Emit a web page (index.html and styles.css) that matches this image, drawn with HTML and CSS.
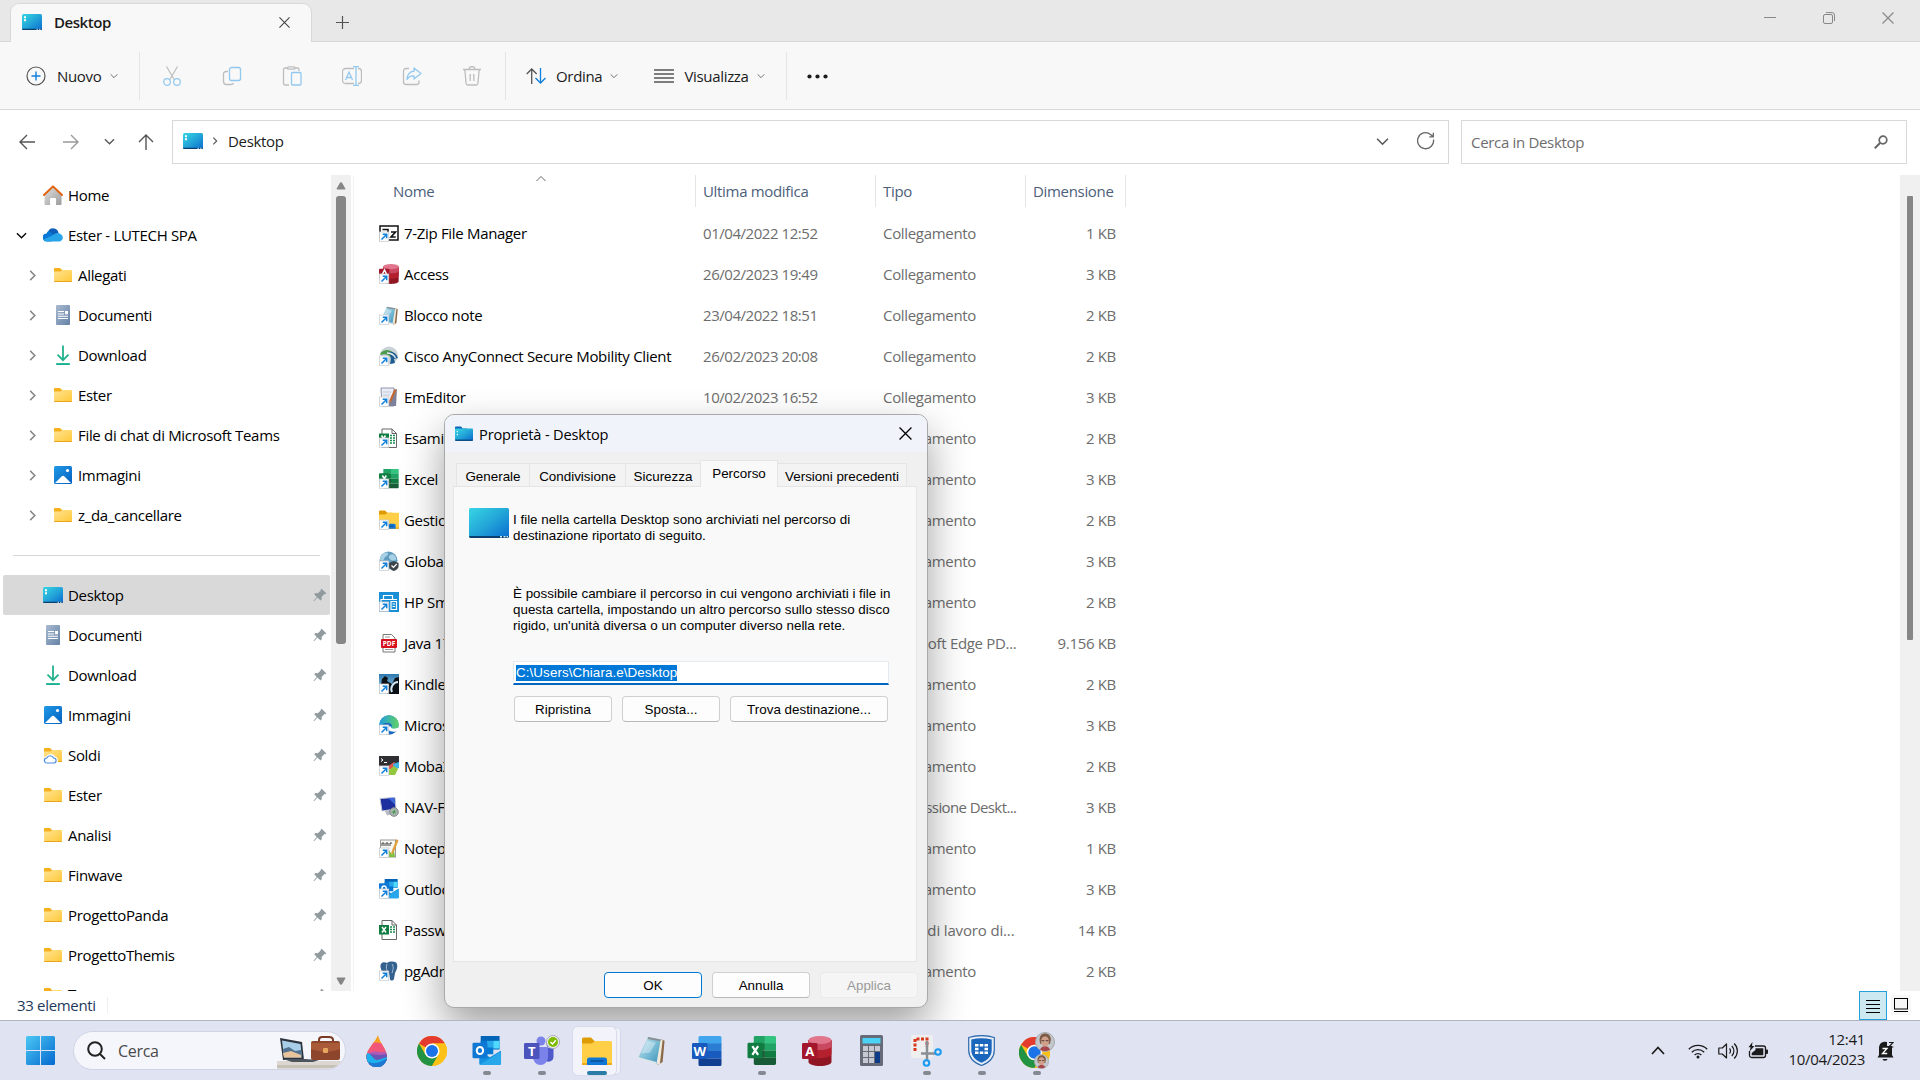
FILE: index.html
```
<!DOCTYPE html>
<html lang="it">
<head>
  <meta charset="utf-8">
  <title>Desktop</title>
  <link rel="stylesheet" href="styles.css">
</head>
<body>

<svg class="defs" width="0" height="0">
  <defs>
    <linearGradient id="g-desk" x1="0" y1="0" x2="1" y2="1"><stop offset="0" stop-color="#37d6e4"/><stop offset=".5" stop-color="#23a6d8"/><stop offset="1" stop-color="#0a6bd0"/></linearGradient>
    <linearGradient id="g-fold" x1="0" y1="0" x2="1" y2="1"><stop offset="0" stop-color="#ffe394"/><stop offset="1" stop-color="#ffc937"/></linearGradient>
    <linearGradient id="g-doc" x1="0" y1="0" x2="1" y2="1"><stop offset="0" stop-color="#a9bad0"/><stop offset="1" stop-color="#6482a6"/></linearGradient>
    <linearGradient id="g-img" x1="0" y1="0" x2="1" y2="1"><stop offset="0" stop-color="#1f9ae6"/><stop offset="1" stop-color="#0560bf"/></linearGradient>
    <linearGradient id="g-down" x1="0" y1="0" x2="0" y2="1"><stop offset="0" stop-color="#35c48c"/><stop offset="1" stop-color="#12a5a0"/></linearGradient>
    <linearGradient id="g-home" x1="0" y1="0" x2="1" y2="1"><stop offset="0" stop-color="#e2e2e2"/><stop offset="1" stop-color="#9b9b9b"/></linearGradient>
    <linearGradient id="g-note" x1="0" y1="0" x2="1" y2="1"><stop offset="0" stop-color="#cdeaf4"/><stop offset=".6" stop-color="#6fb6d2"/><stop offset="1" stop-color="#3f8fb3"/></linearGradient>
    <linearGradient id="g-win" gradientUnits="userSpaceOnUse" x1="0" y1="0" x2="29" y2="29"><stop offset="0" stop-color="#4cc8f4"/><stop offset="1" stop-color="#0468cf"/></linearGradient>
    <linearGradient id="g-edge" x1="0" y1="0" x2="1" y2="0"><stop offset="0" stop-color="#1e9de0"/><stop offset="1" stop-color="#62d263"/></linearGradient>
    <linearGradient id="g-kindle" x1="0" y1="0" x2="0" y2="1"><stop offset="0" stop-color="#2b77ad"/><stop offset="1" stop-color="#b9dff2"/></linearGradient>
    <clipPath id="c-drop"><path d="M12 0C13 7 21 14 21 22A10.200 10 0 0 1 .4 22C.4 14 9 8 12 0z"/></clipPath>
  </defs>

  <symbol id="desk" viewBox="0 0 20 16">
    <rect width="20" height="16" rx="1.500" fill="url(#g-desk)"/>
    <path d="M0 14.800h20a1.200 1.200 0 0 1-1.200 1.200H1.200A1.200 1.200 0 0 1 0 14.800z" fill="#0b3f6e"/>
    <path d="M2 2.300h2v2H2zM2 5.300h2v2H2z" fill="#fff"/>
    <path d="M14.500 14.800h1.500v1h-1.500zM17 14.800h1.500v1H17z" fill="#bfe6f7"/>
  </symbol>
  <symbol id="desk-big" viewBox="0 0 40 30">
    <rect width="40" height="30" rx="1.500" fill="url(#g-desk)"/>
    <path d="M0 28h40l-1 2H1z" fill="#0b3f6e"/>
    <path d="M31 28h2v1.500h-2zM34.500 28h2v1.500h-2zM37.500 28H39v1.500h-1.500z" fill="#cdeefa"/>
  </symbol>
  <symbol id="desk-folder" viewBox="0 0 18 15">
    <path d="M0 1.500A1 1 0 0 1 1 .5h5l1.800 2H12v3H0z" fill="#0c62b8"/>
    <rect y="2.500" width="18" height="12" rx="1" fill="url(#g-desk)"/>
    <path d="M0 13.500h18v.5a1 1 0 0 1-1 1H1a1 1 0 0 1-1-1z" fill="#0b4f86"/>
    <path d="M1.800 5h1.200v1.200H1.800zM1.800 8h1.200v1.200H1.800z" fill="#fff"/>
  </symbol>
  <symbol id="folder" viewBox="0 0 20 20">
    <path d="M1 4a1 1 0 0 1 1-1h5l2 2v3H1z" fill="#f6b01e"/>
    <path d="M1 6.600h6.500L9.200 5H18a1 1 0 0 1 1 1v10a1 1 0 0 1-1 1H2a1 1 0 0 1-1-1z" fill="url(#g-fold)"/>
    <path d="M1 16h18a1 1 0 0 1-1 1H2a1 1 0 0 1-1-1z" fill="#eba31b"/>
  </symbol>
  <symbol id="folder-cloud" viewBox="0 0 20 20">
    <use href="#folder"/>
    <path d="M4.500 18.500a3 3 0 0 1-.2-6 4 4 0 0 1 7 .2 3 3 0 0 1-.3 5.800z" fill="#fff" stroke="#fff" stroke-width="3"/>
    <path d="M4 18a2.500 2.500 0 0 1-.2-5 3.700 3.700 0 0 1 6.800 0 2.500 2.500 0 0 1 0 5z" fill="#fff" stroke="#4b8be0" stroke-width="1.200"/>
  </symbol>
  <symbol id="doc" viewBox="0 0 20 20">
    <rect x="3" width="14" height="20" rx="1" fill="url(#g-doc)"/>
    <path d="M5 6.500h6M5 9h6M5 11.300h10M5 13.500h10" stroke="#fff" stroke-width="1.100"/>
    <rect x="12" y="6" width="3" height="3.300" fill="#fff"/>
  </symbol>
  <symbol id="down" viewBox="0 0 20 20">
    <path d="M10 .5v14.500M4.500 9.700l5.500 5.500 5.500-5.500" fill="none" stroke="#22b28e" stroke-width="1.800"/>
    <rect x="3" y="18" width="14" height="2" rx=".8" fill="url(#g-down)"/>
  </symbol>
  <symbol id="img" viewBox="0 0 20 20">
    <rect x="1" y="1" width="18" height="18" rx="1.500" fill="url(#g-img)"/>
    <path d="M2 18l6.500-6.500a2 2 0 0 1 3 0L18 18z" fill="#fff"/>
    <circle cx="14.500" cy="5.500" r="1.600" fill="#fff"/>
  </symbol>
  <symbol id="home" viewBox="0 0 20 20">
    <path d="M1.500 9.500L10 1.500l8.500 8V19a1 1 0 0 1-1 1H13v-6a1 1 0 0 0-1-1H8a1 1 0 0 0-1 1v6H2.500a1 1 0 0 1-1-1z" fill="url(#g-home)"/>
    <path d="M1 10L10 1.400 19 10" fill="none" stroke="#e2620d" stroke-width="2" stroke-linecap="round" stroke-linejoin="round"/>
  </symbol>
  <symbol id="cloud" viewBox="0 0 20 14">
    <path d="M5 5a5.600 5.600 0 0 1 10.300 0z" fill="#0f5fb8"/>
    <path d="M4 13.500A4 4 0 0 1 3.500 5.400 5.400 5.400 0 0 1 10 2l6.500 6L8 13.500z" fill="#0a78d6"/>
    <path d="M5.500 2.500A5.700 5.700 0 0 1 15.500 5L11 7z" fill="#0f5fb8"/>
    <path d="M3.500 13.500c-1.500-.2-2.500-1-3-2L9.500 7.500c2-2.500 6-3.500 8-1.500a4 4 0 0 1-.6 7.500z" fill="#28a4e8"/>
  </symbol>
  <symbol id="pin" viewBox="0 0 14 14">
    <path d="M8.600.7l4.700 4.500-1 1-.9-.1-2.800 2.800.1 2.400-1.200 1.200-3-2.900L1 13.200l-.5-.4L3.800 9 1.200 6.300l1.200-1.200 2.500.1L7.700 2.400V1.600z" fill="#919a9f"/>
  </symbol>

  <symbol id="shortcut" viewBox="0 0 20 20">
    <rect x=".4" y="10" width="9.300" height="9.300" fill="#fff" stroke="#c9cdd2" stroke-width=".8"/>
    <path d="M2.500 17.500L7.300 12.700M3.700 12.300h4v4" fill="none" stroke="#0f7fdc" stroke-width="1.500"/>
  </symbol>

  <symbol id="chev-d" viewBox="0 0 12 12"><path d="M1 3.500l5 5 5-5" fill="none" stroke="currentColor" stroke-width="1.400"/></symbol>
  <symbol id="chev-r" viewBox="0 0 12 12"><path d="M3.500 1l5 5-5 5" fill="none" stroke="currentColor" stroke-width="1.700"/></symbol>
  <symbol id="x" viewBox="0 0 12 12"><path d="M.5.5l11 11M11.500.5l-11 11" fill="none" stroke="currentColor" stroke-width="1.200"/></symbol>

  <!-- office tiles, shared by the list and the taskbar -->
  <symbol id="word" viewBox="0 0 30 30">
    <path d="M8 0h20a1.500 1.500 0 0 1 1.500 1.500V8H6.500V1.500A1.500 1.500 0 0 1 8 0z" fill="#41a5ee"/>
    <path d="M6.500 7.500h23V15h-23z" fill="#2b7cd3"/><path d="M6.500 15h23v7.500h-23z" fill="#185abd"/>
    <path d="M6.500 22.500h23v6A1.500 1.500 0 0 1 28 30H8a1.500 1.500 0 0 1-1.500-1.500z" fill="#103f91"/>
    <rect y="7" width="15.500" height="16" rx="1.300" fill="#185abd"/>
  </symbol>
  <symbol id="excel" viewBox="0 0 30 30">
    <path d="M8 0h10v8H6.500V1.500A1.500 1.500 0 0 1 8 0z" fill="#21a366"/><path d="M18 0h10a1.500 1.500 0 0 1 1.500 1.500V8H18z" fill="#33c481"/>
    <path d="M6.500 7.500H18V15H6.500z" fill="#107c41"/><path d="M18 7.500h11.500V15H18z" fill="#21a366"/>
    <path d="M6.500 15H18v7.500H6.500z" fill="#185c37"/><path d="M18 15h11.500v7.500H18z" fill="#107c41"/>
    <path d="M6.500 22.500h23v6A1.500 1.500 0 0 1 28 30H8a1.500 1.500 0 0 1-1.500-1.500z" fill="#185c37"/>
    <rect y="7" width="15.500" height="16" rx="1.300" fill="#107c41"/>
    <path d="M5 10.500l6 9M11 10.500l-6 9" stroke="#fff" stroke-width="2.300"/>
  </symbol>
  <symbol id="access" viewBox="0 0 30 30">
    <path d="M6.500 4v22c0 2.200 5 4 11.500 4s11.500-1.800 11.500-4V4z" fill="#8f1622"/>
    <path d="M6.500 4v14c0 2.200 5 4 11.500 4s11.500-1.800 11.500-4V4z" fill="#b5202f"/>
    <path d="M6.500 4v6c0 2.200 5 4 11.500 4s11.500-1.800 11.500-4V4z" fill="#c94a60"/>
    <ellipse cx="18" cy="4" rx="11.500" ry="4" fill="#e0758c"/>
    <rect y="7" width="15.500" height="16" rx="1.300" fill="#a4162c"/>
  </symbol>
  <symbol id="outlook" viewBox="0 0 30 30">
    <path d="M8.500 0H28v14H8.500z" fill="#0364b8"/>
    <path d="M8.500 5h6.500v7H8.500zM15 12h6.500v7H15z" fill="#0078d4"/><path d="M15 5h6.500v7H15z" fill="#28a8ea"/>
    <path d="M21.500 5H28v8h-6.500z" fill="#50d9ff"/>
    <path d="M7 15l11 7 11.500-7v13.500A1.500 1.500 0 0 1 28 30H8.500A1.500 1.500 0 0 1 7 28.500z" fill="#1490df"/>
    <path d="M7 30l22.500-14v12.500A1.500 1.500 0 0 1 28 30z" fill="#28a8ea"/>
    <rect y="7" width="15.500" height="16" rx="1.300" fill="#0f78d4"/>
    <ellipse cx="7.700" cy="15" rx="3.300" ry="3.700" fill="none" stroke="#fff" stroke-width="2.100"/>
  </symbol>
  <symbol id="notepad" viewBox="0 0 30 30">
    <path d="M24 3l4 2-2 22-5 3z" fill="#8b6a4a"/>
    <path d="M22 3l4 1-3 26-2-1z" fill="#f2ead9"/>
    <path d="M11 1l13 2.500-4.500 25.500L1 22z" fill="url(#g-note)"/>
    <path d="M11 1l13 2.500-.4 2L10.300 3z" fill="#8a8f94"/>
    <path d="M1 22l18.500 5v2.300L1 23.500z" fill="#dfe7ea"/>
    <path d="M10 5l9 2-6 10-9 1z" fill="#fff" opacity=".35"/>
  </symbol>
  <symbol id="chrome" viewBox="0 0 30 30">
    <circle cx="15" cy="15" r="15" fill="#fbc116"/>
    <path d="M15 15L2 7.500A15 15 0 0 1 28 7.500H15z" fill="#e33b2e"/>
    <path d="M2 7.500A15 15 0 0 0 15 30l6.500-11.300L15 15 8.500 18.700z" fill="#229342"/>
    <path d="M28 7.500H15v7.500l6.500 3.700L15 30A15 15 0 0 0 28 7.500z" fill="#fbc116"/>
    <circle cx="15" cy="15" r="7.500" fill="#fff"/><circle cx="15" cy="15" r="6" fill="#1a73e8"/>
  </symbol>
  <symbol id="explorer" viewBox="0 0 30 28">
    <path d="M0 2a1.500 1.500 0 0 1 1.500-1.500H9L12.500 4H20v6H0z" fill="#dd9c05"/>
    <path d="M0 6.500h10L13 4h15.500A1.500 1.500 0 0 1 30 5.500V28H0z" fill="#ffcf48"/>
    <path d="M0 26h30v2H0z" fill="#efa91b"/>
    <path d="M5 28v-5a2.500 2.500 0 0 1 2.500-2.500h15A2.500 2.500 0 0 1 25 23v5z" fill="#1077d4"/>
    <path d="M8.500 24h13" stroke="#0a4e97" stroke-width="1.500"/>
  </symbol>
  <symbol id="face" viewBox="0 0 20 20">
    <circle cx="10" cy="10" r="9.500" fill="#c3c6ca" stroke="#a5a8ac"/>
    <path d="M4.500 8C4.500 3.500 7 1.500 10 1.500S16 3.500 15.800 8l-1 4h-9.500z" fill="#7c5b47"/>
    <ellipse cx="10" cy="9.500" rx="4" ry="5.300" fill="#cfa08a"/>
    <path d="M5 17.500c1-2.500 3-3 5-3s4 .5 5 3a9.500 9.500 0 0 1-10 0z" fill="#a8454a"/>
    <path d="M6.500 8.700h2.800M10.700 8.700h2.800" stroke="#6b4a44" stroke-width="1.300"/>
  </symbol>
</svg>

<div class="window">
  <div class="titlebar">
    <div class="tab">
      <svg width="20" height="16"><use href="#desk"/></svg>
      <span class="tab-title">Desktop</span>
      <svg class="tab-close" width="11" height="11"><use href="#x"/></svg>
    </div>
    <svg class="tab-new" width="13" height="13" viewBox="0 0 13 13"><path d="M6.500 0v13M0 6.500h13" stroke="#555" stroke-width="1.200"/></svg>
    <div class="win-buttons">
      <svg width="12" height="12" viewBox="0 0 12 12"><path d="M0 5.500h12" stroke="#888"/></svg>
      <svg width="12" height="12" viewBox="0 0 12 12" fill="none" stroke="#888"><rect x=".5" y="2.500" width="9" height="9" rx="1.500"/><path d="M3 .6h6a2.500 2.500 0 0 1 2.500 2.500V9"/></svg>
      <svg width="12" height="12"><use href="#x"/></svg>
    </div>
  </div>

  <div class="toolbar">
    <div class="tool tool-new">
      <svg width="20" height="20" viewBox="0 0 20 20" fill="none"><circle cx="10" cy="10" r="9" stroke="#555" stroke-width="1.200"/><path d="M10 5.500v9M5.500 10h9" stroke="#0f7fdc" stroke-width="1.400"/></svg>
      <span>Nuovo</span>
      <svg class="caret" width="8" height="8"><use href="#chev-d"/></svg>
    </div>
    <div class="tool-group">
      <svg width="20" height="20" viewBox="0 0 20 20" fill="none" stroke-width="1.200"><path d="M4.500.5l8 13.500M15.500.5l-8 13.500" stroke="#bdbdbd"/><circle cx="5" cy="16" r="3.300" stroke="#93c8ee"/><circle cx="15" cy="16" r="3.300" stroke="#93c8ee"/></svg>
      <svg width="20" height="20" viewBox="0 0 20 20" fill="none" stroke-width="1.300"><path d="M6 5.500H4A2.500 2.500 0 0 0 1.500 8v7.500A3 3 0 0 0 4.500 18.500H9A2.500 2.500 0 0 0 11.500 17" stroke="#bdbdbd"/><rect x="7.500" y="1.500" width="11" height="13" rx="2" stroke="#93c8ee"/></svg>
      <svg width="20" height="20" viewBox="0 0 20 20" fill="none" stroke-width="1.300"><path d="M6 2H3a1.500 1.500 0 0 0-1.500 1.500v14A1.500 1.500 0 0 0 3 19h4M13 2h2.500A1.500 1.500 0 0 1 17 3.500V5" stroke="#bdbdbd"/><rect x="5.500" y=".8" width="7.500" height="2.400" rx="1.200" stroke="#bdbdbd"/><rect x="9.500" y="6.500" width="9.500" height="12.500" rx="1" stroke="#93c8ee"/></svg>
      <svg width="20" height="20" viewBox="0 0 20 20" fill="none" stroke-width="1.300"><path d="M12 2.500H3.500a3 3 0 0 0-3 3v9a3 3 0 0 0 3 3H12M16 2.500h.5a3 3 0 0 1 3 3v9a3 3 0 0 1-3 3H16" stroke="#bdbdbd"/><path d="M3.500 14L7 6l3.500 8M4.800 11.500h4.400M14 .5v19M11 .5h6M11 19.500h6" stroke="#93c8ee"/></svg>
      <svg width="20" height="20" viewBox="0 0 20 20" fill="none" stroke-width="1.300" stroke-linejoin="round"><path d="M7 2.500H4a2.500 2.500 0 0 0-2.500 2.500v11A2.500 2.500 0 0 0 4 18.500h10.500A2.500 2.500 0 0 0 17 16v-1.500" stroke="#bdbdbd"/><path d="M12 2l7 5.500-7 5.500V9.800c-3.500-.2-5.500 1-7 3.700.2-4.500 2.500-7.800 7-8.300z" stroke="#93c8ee"/></svg>
      <svg width="20" height="20" viewBox="0 0 20 20" fill="none" stroke="#bdbdbd" stroke-width="1.300"><path d="M1 3.500h18M7 3.500a3 3 0 0 1 6 0M2.800 3.500l1.300 14A1.700 1.700 0 0 0 5.800 19h8.400a1.700 1.700 0 0 0 1.700-1.500l1.300-14M8.200 8v7M11.800 8v7"/></svg>
    </div>
    <div class="tool tool-sort">
      <svg width="20" height="16" viewBox="0 0 20 16" fill="none" stroke-width="1.300"><path d="M5.700 16V1M.7 6l5-5 5 5" stroke="#555"/><path d="M14.500 0v15M9.500 10l5 5 5-5" stroke="#0f7fdc"/></svg>
      <span>Ordina</span>
      <svg class="caret" width="8" height="8"><use href="#chev-d"/></svg>
    </div>
    <div class="tool tool-view">
      <svg width="20" height="14" viewBox="0 0 20 14"><path d="M0 1h20M0 5h20M0 9h20M0 13h20" stroke="#555" stroke-width="1.300"/></svg>
      <span>Visualizza</span>
      <svg class="caret" width="8" height="8"><use href="#chev-d"/></svg>
    </div>
    <div class="tool tool-more">
      <svg width="21" height="5" viewBox="0 0 21 5" fill="#1b1b1b"><circle cx="2.500" cy="2.500" r="2.100"/><circle cx="10.500" cy="2.500" r="2.100"/><circle cx="18.500" cy="2.500" r="2.100"/></svg>
    </div>
  </div>

  <div class="addressbar">
    <div class="nav">
      <svg width="16" height="16" viewBox="0 0 16 16"><path d="M16 8H1M8 1L1 8l7 7" /></svg>
      <svg class="off" width="16" height="16" viewBox="0 0 16 16"><path d="M0 8h15M8 1l7 7-7 7" /></svg>
      <svg width="11" height="11" viewBox="0 0 12 12"><path d="M1 3.500l5 5 5-5"/></svg>
      <svg width="16" height="16" viewBox="0 0 16 16"><path d="M8 16V1M1 8l7-7 7 7" /></svg>
    </div>
    <div class="path">
      <svg width="20" height="16"><use href="#desk"/></svg>
      <svg class="path-sep" width="8" height="8"><use href="#chev-r"/></svg>
      <span>Desktop</span>
      <svg class="path-drop" width="13" height="13"><use href="#chev-d"/></svg>
      <svg width="18" height="18" viewBox="0 0 18 18" fill="none" stroke="#666" stroke-width="1.300"><path d="M16.500 7.500A8 8 0 1 1 13.500 2.400L16 4.500M16.300.8v4h-4"/></svg>
    </div>
    <div class="search">
      <span>Cerca in Desktop</span>
      <svg width="14" height="14" viewBox="0 0 14 14" fill="none" stroke="#666"><circle cx="9" cy="5" r="3.800" stroke-width="1.700"/><path d="M6.300 7.700L.8 13.200" stroke-width="2"/></svg>
    </div>
  </div>

  <div class="main">
    <div class="sidebar">
      <div class="nav-item"><svg class="ico"><use href="#home"/></svg>Home</div>
      <div class="nav-item"><svg class="open"><use href="#chev-d"/></svg><svg class="ico"><use href="#cloud"/></svg>Ester - LUTECH SPA</div>
      <div class="nav-item sub"><svg class="closed"><use href="#chev-r"/></svg><svg class="ico"><use href="#folder"/></svg>Allegati</div>
      <div class="nav-item sub"><svg class="closed"><use href="#chev-r"/></svg><svg class="ico"><use href="#doc"/></svg>Documenti</div>
      <div class="nav-item sub"><svg class="closed"><use href="#chev-r"/></svg><svg class="ico"><use href="#down"/></svg>Download</div>
      <div class="nav-item sub"><svg class="closed"><use href="#chev-r"/></svg><svg class="ico"><use href="#folder"/></svg>Ester</div>
      <div class="nav-item sub"><svg class="closed"><use href="#chev-r"/></svg><svg class="ico"><use href="#folder"/></svg>File di chat di Microsoft Teams</div>
      <div class="nav-item sub"><svg class="closed"><use href="#chev-r"/></svg><svg class="ico"><use href="#img"/></svg>Immagini</div>
      <div class="nav-item sub"><svg class="closed"><use href="#chev-r"/></svg><svg class="ico"><use href="#folder"/></svg>z_da_cancellare</div>
      <div class="nav-rule"></div>
      <div class="nav-item selected"><svg class="ico"><use href="#desk"/></svg>Desktop<svg class="pin"><use href="#pin"/></svg></div>
      <div class="nav-item"><svg class="ico"><use href="#doc"/></svg>Documenti<svg class="pin"><use href="#pin"/></svg></div>
      <div class="nav-item"><svg class="ico"><use href="#down"/></svg>Download<svg class="pin"><use href="#pin"/></svg></div>
      <div class="nav-item"><svg class="ico"><use href="#img"/></svg>Immagini<svg class="pin"><use href="#pin"/></svg></div>
      <div class="nav-item"><svg class="ico"><use href="#folder-cloud"/></svg>Soldi<svg class="pin"><use href="#pin"/></svg></div>
      <div class="nav-item"><svg class="ico"><use href="#folder"/></svg>Ester<svg class="pin"><use href="#pin"/></svg></div>
      <div class="nav-item"><svg class="ico"><use href="#folder"/></svg>Analisi<svg class="pin"><use href="#pin"/></svg></div>
      <div class="nav-item"><svg class="ico"><use href="#folder"/></svg>Finwave<svg class="pin"><use href="#pin"/></svg></div>
      <div class="nav-item"><svg class="ico"><use href="#folder"/></svg>ProgettoPanda<svg class="pin"><use href="#pin"/></svg></div>
      <div class="nav-item"><svg class="ico"><use href="#folder"/></svg>ProgettoThemis<svg class="pin"><use href="#pin"/></svg></div>
      <div class="nav-item last"><svg class="ico"><use href="#folder"/></svg><span>Temp</span><svg class="pin"><use href="#pin"/></svg></div>
    </div>
    <div class="scrollbar side-scroll">
      <svg width="10" height="8" viewBox="0 0 10 8"><path d="M3.800 1a1.400 1.400 0 0 1 2.400 0L9.300 6.500 9 7.500H1L.7 6.500z" fill="#868686"/></svg>
      <div class="thumb"></div>
      <svg width="10" height="8" viewBox="0 0 10 8"><path d="M3.800 7a1.400 1.400 0 0 0 2.400 0L9.300 1.500 9 .5H1L.7 1.500z" fill="#868686"/></svg>
    </div>

    <div class="files">
      <div class="file-head">
        <span class="col-name">Nome<svg class="sort-mark" width="12" height="7" viewBox="0 0 12 7"><path d="M1.500 6L6 1.500 10.500 6" fill="none" stroke="#666"/></svg></span>
        <span>Ultima modifica</span>
        <span>Tipo</span>
        <span>Dimensione</span>
      </div>
      <div class="file">
        <svg viewBox="0 0 20 20"><rect x="1" y="3" width="18" height="14" fill="#fff" stroke="#111" stroke-width="1.500"/><path d="M3.500 6.500h5.500v4M12 9h4.500l-4.500 5h4.700" fill="none" stroke="#111" stroke-width="1.600"/><use href="#shortcut" y="-1"/></svg>
        <span>7-Zip File Manager</span><span>01/04/2022 12:52</span><span>Collegamento</span><span>1 KB</span></div>
      <div class="file">
        <svg viewBox="0 0 20 20"><use href="#access" width="20" height="20"/><path d="M3 11l2.500-5L8 11" fill="none" stroke="#fff" stroke-width="1.500"/><use href="#shortcut"/></svg>
        <span>Access</span><span>26/02/2023 19:49</span><span>Collegamento</span><span>3 KB</span></div>
      <div class="file">
        <svg viewBox="0 0 20 20"><use href="#notepad" x="1" y="1" width="19" height="19"/><use href="#shortcut"/></svg>
        <span>Blocco note</span><span>23/04/2022 18:51</span><span>Collegamento</span><span>2 KB</span></div>
      <div class="file">
        <svg viewBox="0 0 20 20"><circle cx="10" cy="9.500" r="9" fill="#c9d2d6"/><path d="M1.500 7a9 9 0 0 1 14 1l-3 5C11 9 6 7 1.500 9z" fill="#4c9a4d"/><path d="M9 6c5-1 8 1 10 6l-4 1 1 4-5 1c1-4 2-8-2-12z" fill="#1d5a8f"/><path d="M8 7c4 0 7 2 8.500 5" fill="none" stroke="#e9f0f3" stroke-width="1.300"/><use href="#shortcut"/></svg>
        <span>Cisco AnyConnect Secure Mobility Client</span><span>26/02/2023 20:08</span><span>Collegamento</span><span>2 KB</span></div>
      <div class="file">
        <svg viewBox="0 0 20 20"><path d="M2 1h13v18H3z" fill="#eceef5" stroke="#8c92ad"/><path d="M15 3l3-1-1 17h-8z" fill="#7d829c"/><path d="M4 5h8M4 8h7" stroke="#c2c6d8"/><path d="M15.500 2l2 1L12 15l-2 1 .3-2.500z" fill="#c56a32"/><use href="#shortcut"/></svg>
        <span>EmEditor</span><span>10/02/2023 16:52</span><span>Collegamento</span><span>3 KB</span></div>
      <div class="file">
        <svg viewBox="0 0 20 20"><path d="M3 1h10l4.500 4.500V19.500H3z" fill="#fff" stroke="#666"/><path d="M13 1v4.500h4.500" fill="none" stroke="#666"/><path d="M11 7.500h2M14 7.500h2M11 10h2M14 10h2M11 12.500h2M14 12.500h2M11 15h2M14 15h2" stroke="#1a8a4c" stroke-width="1.500"/><rect y="5.500" width="10" height="10" fill="#107c41"/><path d="M2.500 7.500l4 6M6.500 7.500l-4 6" stroke="#fff" stroke-width="1.500"/><use href="#shortcut"/></svg>
        <span>Esami</span><span></span><span>Collegamento</span><span>2 KB</span></div>
      <div class="file">
        <svg viewBox="0 0 20 20"><use href="#excel" y="-.5" width="20" height="20"/><use href="#shortcut"/></svg>
        <span>Excel</span><span></span><span>Collegamento</span><span>3 KB</span></div>
      <div class="file">
        <svg viewBox="0 0 20 20"><use href="#explorer" width="20" height="19"/><use href="#shortcut"/></svg>
        <span>Gestione</span><span></span><span>Collegamento</span><span>2 KB</span></div>
      <div class="file">
        <svg viewBox="0 0 20 20"><circle cx="9.500" cy="9.500" r="9" fill="#5f9cc0"/><path d="M3 4c2-3 6-3 6-1S6 5 5 8 1 9 1 8s1-3 2-4zM11 4c3-2 5 0 6 3s-3 3-5 2-3-4-1-5z" fill="#a8d0e4"/><path d="M10 12l4.800-2 4.800 2v3c0 2.500-2 4-4.800 5-2.800-1-4.800-2.500-4.800-5z" fill="#3d444a"/><path d="M12.500 14.500l2 2 3.200-3.500" fill="none" stroke="#fff" stroke-width="1.200"/><use href="#shortcut"/></svg>
        <span>GlobalProtect</span><span></span><span>Collegamento</span><span>3 KB</span></div>
      <div class="file">
        <svg viewBox="0 0 20 20"><rect width="20" height="20" fill="#1b8fd6"/><path d="M4.500 7V3.500h9V7M2 13V7.500h16M12 9.500h5.500v8H12zM13.500 12h2.500M13.500 14.500h2.500" fill="none" stroke="#fff" stroke-width="1.200"/><use href="#shortcut"/></svg>
        <span>HP Smart</span><span></span><span>Collegamento</span><span>2 KB</span></div>
      <div class="file">
        <svg viewBox="0 0 20 20"><path d="M4 1.500h8.500L16 5v14H4z" fill="#fff" stroke="#777"/><path d="M6 4h5M6 16.500h8" stroke="#999"/><rect x="2" y="6" width="16" height="9" rx="1" fill="#d5121e"/><text x="10" y="13" class="pdf">PDF</text></svg>
        <span>Java 17</span><span></span><span>Microsoft Edge PD...</span><span>9.156 KB</span></div>
      <div class="file">
        <svg viewBox="0 0 20 20"><rect width="20" height="20" fill="url(#g-kindle)"/><path d="M3 5l3-3 3 2-1 3 5 3 3-6 4-1v17H8l-1-7-5-2z" fill="#0b1016"/><path d="M19 8a7 7 0 0 0-6 10" fill="none" stroke="#cfe7f4" stroke-width="2"/><use href="#shortcut"/></svg>
        <span>Kindle</span><span></span><span>Collegamento</span><span>2 KB</span></div>
      <div class="file">
        <svg viewBox="0 0 20 20"><circle cx="10" cy="10" r="9.700" fill="#1468bd"/><path d="M.4 9A9.700 9.700 0 0 1 19.700 9c.2 3.500-2 5.500-5 5.500-2 0-3-1-2-2.500.8-3-2-4.500-5-4C4 8 1.500 10 .4 13z" fill="url(#g-edge)"/><path d="M7.500 11c0 3 3 6.500 9.500 5.500L19 15v-2.500c-2 1.500-7 2-7-1z" fill="#fff"/><use href="#shortcut"/></svg>
        <span>Microsoft Edge</span><span></span><span>Collegamento</span><span>3 KB</span></div>
      <div class="file">
        <svg viewBox="0 0 20 20"><rect width="20" height="10" fill="#2e2e33"/><path d="M2 2.500l2 1.500-2 1.500M5 6.500h3" fill="none" stroke="#fff"/><path d="M8 11l7-5 3 3-6 6z" fill="#e2574c"/><path d="M14 8l6-2v6l-5 2z" fill="#3cb4e5"/><path d="M10 14l5-4 4 3-3 6h-6z" fill="#93c83e"/><use href="#shortcut"/></svg>
        <span>MobaXterm</span><span></span><span>Collegamento</span><span>2 KB</span></div>
      <div class="file">
        <svg viewBox="0 0 20 20"><path d="M1 1.500l15-1 1 11.500L3 14z" fill="#1c2f9c" stroke="#c4c8d6"/><path d="M9 1l6.500-.3.6 7z" fill="#3d68da"/><path d="M6 14l5-1 2 4-5 1.500z" fill="#b7bcc6"/><circle cx="15" cy="15" r="4.300" fill="#a9b3ae" stroke="#828a88"/><path d="M13 15.500l1.500-1.500v3M17 14.500L15.500 16v-3" fill="none" stroke="#3f9b4b" stroke-width=".9"/></svg>
        <span>NAV-Finance</span><span></span><span class="tight">Connessione Deskt...</span><span>3 KB</span></div>
      <div class="file">
        <svg viewBox="0 0 20 20"><rect x="1.500" y="2" width="15" height="17" fill="#f6f6f2" stroke="#999"/><path d="M3 8V5h2v3M7 8V5h2v3M11 8V5h2" fill="none" stroke="#444"/><path d="M17.500 1l2 1.500L14 16l-2 1 .3-2.500z" fill="#e0a03c"/><path d="M10 12l3 5 2-4 1 6h-6z" fill="#7fbf3f"/><use href="#shortcut"/></svg>
        <span>Notepad++</span><span></span><span>Collegamento</span><span>1 KB</span></div>
      <div class="file">
        <svg viewBox="0 0 20 20"><use href="#outlook" y="-.5" width="20" height="20"/><use href="#shortcut"/></svg>
        <span>Outlook</span><span></span><span>Collegamento</span><span>3 KB</span></div>
      <div class="file">
        <svg viewBox="0 0 20 20"><path d="M3 .5h10L17.500 5v14.500H3z" fill="#fff" stroke="#666"/><path d="M13 .5V5h4.500" fill="none" stroke="#666"/><path d="M11 7h2M14 7h2M11 9.500h2M14 9.500h2M11 12h2M14 12h2" stroke="#1a8a4c" stroke-width="1.500"/><rect y="5" width="10" height="9.500" fill="#107c41"/><path d="M3 7l4 5.500M7 7l-4 5.500" stroke="#fff" stroke-width="1.500"/></svg>
        <span>Password</span><span></span><span class="loose">Foglio di lavoro di...</span><span>14 KB</span></div>
      <div class="file">
        <svg viewBox="0 0 20 20"><path d="M2 8C0 2 4 0 8 2c3-2 9-2 10 1 1 4-1 7-2 9l-1 6c-1 2-4 2-4 0l-1-6-6 1z" fill="#35618e"/><path d="M8 3c-1 3-1 6 1 8M13 3c2 3 1 6 0 9" fill="none" stroke="#a9c2da"/><use href="#shortcut"/></svg>
        <span>pgAdmin 4</span><span></span><span>Collegamento</span><span>2 KB</span></div>
    </div>
    <div class="scrollbar main-scroll"><div class="thumb"></div></div>
  </div>

  <div class="statusbar">
    <span class="count">33 elementi</span>
    <div class="view-details"><svg width="14" height="14" viewBox="0 0 14 14"><path d="M0 1.500h14M0 5.500h14M0 9.500h14M0 13.500h14" stroke="#000"/></svg></div>
    <div class="view-icons"><svg width="14" height="14" viewBox="0 0 14 14" fill="none" stroke="#000"><rect x=".5" y=".5" width="13" height="10.500"/><path d="M0 13.500h14"/></svg></div>
  </div>
</div>

<div class="dialog">
  <div class="dialog-title">
    <svg width="18" height="15"><use href="#desk-folder"/></svg>
    <span>Proprietà - Desktop</span>
    <svg class="dialog-close" width="13" height="13"><use href="#x"/></svg>
  </div>
  <div class="dialog-tabs">
    <span class="dt-general">Generale</span>
    <span class="dt-share">Condivisione</span>
    <span class="dt-security">Sicurezza</span>
    <span class="dt-path current">Percorso</span>
    <span class="dt-versions">Versioni precedenti</span>
  </div>
  <div class="dialog-page">
    <div class="intro">
      <svg width="40" height="30"><use href="#desk-big"/></svg>
      <p>I file nella cartella Desktop sono archiviati nel percorso di<br>destinazione riportato di seguito.</p>
    </div>
    <div class="dialog-body">
      <p>È possibile cambiare il percorso in cui vengono archiviati i file in<br>questa cartella, impostando un altro percorso sullo stesso disco<br>rigido, un'unità diversa o un computer diverso nella rete.</p>
      <div class="field"><span>C:\Users\Chiara.e\Desktop</span></div>
      <div class="buttons">
        <button>Ripristina</button>
        <button>Sposta...</button>
        <button class="wide">Trova destinazione...</button>
      </div>
    </div>
  </div>
  <div class="dialog-foot">
    <button class="default">OK</button>
    <button>Annulla</button>
    <button disabled>Applica</button>
  </div>
</div>

<div class="taskbar">
  <svg class="start" width="29" height="29" viewBox="0 0 29 29" fill="url(#g-win)"><path d="M1.500 0H14v14H0V1.500A1.500 1.500 0 0 1 1.500 0zM15 0h12.500A1.500 1.500 0 0 1 29 1.500V14H15zM0 15h14v14H1.500A1.500 1.500 0 0 1 0 27.500zM15 15h14v12.500a1.500 1.500 0 0 1-1.500 1.500H15z"/></svg>
  <div class="task-search">
    <svg width="19" height="19" viewBox="0 0 19 19" fill="none" stroke="#222" stroke-width="2"><circle cx="8" cy="8" r="6.800"/><path d="M13 13l5 5"/></svg>
    <span>Cerca</span>
    <svg class="picture" width="68" height="37" viewBox="0 0 68 37">
      <path d="M0 29h66v4q0 3-5 3H0z" fill="#dcd7d0"/><path d="M0 33h66l-3 3.500H0z" fill="#c8c1b8"/>
      <path d="M3 6l22 4 2 18H6z" fill="#2c333c"/><path d="M5 8.500l18.500 3.500 1.500 13.500H7z" fill="#a9cfe8"/><path d="M6 17l6-2 6 4 6-1 1 7H7z" fill="#50718f"/><path d="M6 21l8-2 10 4v2.500H7z" fill="#e9c39c"/>
      <path d="M6 27h22l14 1-6 2H15z" fill="#4c545e"/>
      <path d="M42 10V8q0-3 3-3h7q4 0 4 3v2" fill="none" stroke="#7a3a22" stroke-width="2"/>
      <rect x="34" y="9" width="29" height="19" rx="2" fill="#8d452c"/><path d="M34 11h29v6q-14 6-29 0z" fill="#a85a39"/><rect x="46" y="16" width="5" height="5" rx="1" fill="#e6a660"/>
    </svg>
  </div>
  <div class="apps">
    <div class="app"><svg width="22" height="32" viewBox="0 0 22 32"><g clip-path="url(#c-drop)"><path d="M0 0h22v32H0z" fill="#f6a21c"/><path d="M0 14C7 3 12 10 22 8v24H0z" fill="#f2577a"/><path d="M0 21c6-9 12-1 22-5v16H0z" fill="#b05ab8"/><path d="M0 20c6-3 9 2 22-1v13H0z" fill="#6a54b4"/><path d="M0 18c6 0 6 6 11 7 4 0 7-3 11-3v10H0z" fill="#1cb0ec"/><path d="M3 27c6 3 12 0 19-4v9H3z" fill="#1c78d2"/></g></svg></div>
    <div class="app"><svg width="30" height="30"><use href="#chrome"/></svg></div>
    <div class="app running"><svg width="30" height="29"><use href="#outlook"/></svg></div>
    <div class="app running"><svg width="36" height="32" viewBox="0 0 36 32"><circle cx="17" cy="6" r="4.500" fill="#7b83eb"/><circle cx="26" cy="9" r="3.500" fill="#5059c9"/><path d="M22 13h7.500v9a5 5 0 0 1-7.500 4z" fill="#5059c9"/><path d="M9 12h15v10a7.500 8 0 0 1-15 0z" fill="#7b83eb"/><rect y="8" width="15.500" height="16" rx="1.300" fill="#4b53bc"/><text x="7.700" y="20.500" class="tile-letter">T</text><circle cx="29" cy="7" r="6.500" fill="#f5f5f5" stroke="#a7a7b5"/><circle cx="29" cy="7" r="5" fill="#7dba00"/><path d="M26.500 7l2 2 3.300-3.800" fill="none" stroke="#fff" stroke-width="1.500"/></svg></div>
    <div class="app active"><svg width="30" height="28"><use href="#explorer"/></svg></div>
    <div class="app"><svg width="30" height="29"><use href="#notepad"/></svg></div>
    <div class="app"><svg width="30" height="30" viewBox="0 0 30 30"><use href="#word"/><text x="7.700" y="19.700" class="tile-letter">W</text></svg></div>
    <div class="app running"><svg width="30" height="29"><use href="#excel"/></svg></div>
    <div class="app"><svg width="30" height="30" viewBox="0 0 30 30"><use href="#access"/><text x="7.700" y="19.700" class="tile-letter">A</text></svg></div>
    <div class="app"><svg width="23" height="31" viewBox="0 0 23 31"><rect width="23" height="31" rx="1.500" fill="#676b77"/><rect x="2.500" y="3" width="18" height="5.500" fill="#4bd3f5"/><path d="M3 11h5v5H3zM9 11h5v5H9zM15 11h5v5h-5zM3 17h5v5H3zM9 17h5v5H9zM3 23h5v5H3zM9 23h5v5H9z" fill="#c6c9d1"/><path d="M15 17h5v11h-5z" fill="#0d3b87"/></svg></div>
    <div class="app running"><svg width="31" height="32" viewBox="0 0 31 32"><rect width="22" height="23" rx="2" fill="#efefef"/><path d="M4 16V4h12v8" fill="none" stroke="#d8391c" stroke-width="3" stroke-dasharray="3 1.500"/><path d="M16 6v20M10 18.500h15" stroke="#8a8f96" stroke-width="2.500"/><circle cx="15.500" cy="28" r="2.800" fill="none" stroke="#199af0" stroke-width="2"/><circle cx="27" cy="17" r="2.800" fill="none" stroke="#199af0" stroke-width="2"/></svg></div>
    <div class="app running"><svg width="27" height="31" viewBox="0 0 27 31"><path d="M.7 2.500C9 0 18 0 26.300 2.500V15c0 8-6 13-12.800 15.500C6.700 28 .7 23 .7 15z" fill="#e8eef6" stroke="#2f6aae" stroke-width="1.200"/><path d="M3.300 4.500c7-1.800 13.500-1.800 20.400 0V15c0 6.500-4.700 10.500-10.200 12.800C8 25.500 3.300 21.500 3.300 15z" fill="#1a66bd"/><path d="M7 9h3.500v2.500H7zM11.800 9h3.500v2.500h-3.500zM16.500 9H20v2.500h-3.500zM7 12.700h3.500v2.500H7zM16.500 12.700H20v2.500h-3.500zM7 16.400h3.500v2.500H7zM11.800 16.400h3.500v2.500h-3.500zM16.500 16.400H20v2.500h-3.500z" fill="#fff"/></svg></div>
    <div class="app running"><svg width="38" height="40" viewBox="0 0 38 40"><use href="#chrome" x="1" y="6" width="31" height="31"/><use href="#face" x="17" y="0" width="20" height="22"/><use href="#face" x="16" y="22" width="15" height="17"/></svg></div>
  </div>
  <div class="tray">
    <svg class="up" width="14" height="9" viewBox="0 0 14 9"><path d="M1 8l6-6.500L13 8" fill="none" stroke="#1b1b1b" stroke-width="1.700"/></svg>
    <svg class="wifi" width="20" height="16" viewBox="0 0 20 16" fill="none" stroke="#1b1b1b" stroke-width="1.300"><path d="M.8 6.200a13 13 0 0 1 18.400 0M3.800 9.200a8.800 8.800 0 0 1 12.400 0M6.600 12a4.800 4.800 0 0 1 6.800 0"/><circle cx="10" cy="14" r="1.500" fill="#1b1b1b" stroke="none"/></svg>
    <svg class="volume" width="20" height="18" viewBox="0 0 20 18" fill="none" stroke="#1b1b1b" stroke-width="1.200" stroke-linejoin="round"><path d="M.8 6h3.500L8.500 2v14l-4.200-4H.8zM11.500 6.500a3.500 3.500 0 0 1 0 5M13.800 4a7 7 0 0 1 0 10M16.200 1.500a10.500 10.500 0 0 1 0 15"/></svg>
    <svg class="battery" width="20" height="17" viewBox="0 0 20 17"><path d="M7 4h8.500A2 2 0 0 1 17.500 6v7.500a2 2 0 0 1-2 2H3.500a2 2 0 0 1-2-2V9" fill="none" stroke="#1b1b1b" stroke-width="1.300"/><path d="M7.500 6.300H15.300v7H3.700V11l3.800-3zM18 7.500h1a1 1 0 0 1 1 1V11a1 1 0 0 1-1 1h-1zM4.500 0L.5 5.200h2.200L1.500 9.500 6.500 4H4z" fill="#1b1b1b"/></svg>
    <div class="clock"><span>12:41</span><span>10/04/2023</span></div>
    <svg class="bell" width="17" height="20" viewBox="0 0 17 20"><path d="M2 14V7a6 6 0 0 1 8-6v4h5v9l1.500 2.500H.5z" fill="#1b1b1b"/><path d="M5.500 18h5a2.500 1.800 0 0 1-5 0z" fill="#1b1b1b"/><path d="M5.500 7.500H10L5.500 12.500h4.700" fill="none" stroke="#fff" stroke-width="1.300"/><path d="M12 1.500h4L12 6h4.300" fill="none" stroke="#1b1b1b" stroke-width="1.200"/></svg>
  </div>
</div>

</body>
</html>
```
FILE: styles.css
```
* {
  box-sizing: border-box;
}

body {
  margin: 0;
  width: 1920px;
  height: 1080px;
  overflow: hidden;
  position: relative;
  background: #fff;
  color: #1b1b1b;
  font-family: "Open Sans", "Noto Sans", sans-serif;
  font-size: 15px;
  letter-spacing: -0.32px;
  line-height: 20px;
}

svg {
  display: block;
  flex: none;
}

p {
  margin: 0;
}

.defs {
  position: absolute;
}

.tile-letter {
  font: bold 13px "Open Sans", sans-serif;
  fill: #fff;
  text-anchor: middle;
  letter-spacing: 0;
}

.pdf {
  font: bold 6.5px "Open Sans", sans-serif;
  fill: #fff;
  text-anchor: middle;
  letter-spacing: 0;
}

/* explorer window */

.window {
  display: flex;
  flex-direction: column;
  height: 1020px;
}

.titlebar {
  display: flex;
  height: 42px;
  padding: 3px 0 0 10px;
  background: #e8e8e8;
  box-shadow: inset 0 -1px #d8d8d8;
}

.tab {
  display: flex;
  align-items: center;
  width: 302px;
  height: 39px;
  padding: 0 21px 2px 11px;
  background: #f8f8f8;
  border: 1px solid #d8d8d8;
  border-bottom: 0;
  border-radius: 9px 9px 0 0;
}

.tab-title {
  margin-left: 12px;
  font-weight: 600;
  letter-spacing: -0.45px;
}

.tab-close {
  margin-left: auto;
  color: #444;
}

.tab-new {
  margin: 13px 0 0 24px;
}

.win-buttons {
  display: flex;
  gap: 47px;
  margin: 9px 26px 0 auto;
  color: #888;
}

.toolbar {
  display: flex;
  align-items: center;
  height: 68px;
  padding-top: 1px;
  background: #f8f8f8;
  border-bottom: 1px solid #d8d8d8;
}

.tool {
  display: flex;
  align-items: center;
}

.caret {
  color: #666;
}

.tool-new {
  width: 139px;
  padding-left: 26px;
}

.tool-new span {
  margin: 0 9px 0 11px;
}

.tool-group {
  display: flex;
  align-items: center;
  gap: 40px;
  height: 48px;
  padding: 0 23px 0 22px;
  border: solid #e5e5e5;
  border-width: 0 1px;
}

.tool-sort {
  padding-left: 20px;
}

.tool-sort span,
.tool-view span {
  margin: 0 8px 0 10px;
}

.tool-view {
  height: 48px;
  margin-left: 36px;
  padding-right: 21px;
  border-right: 1px solid #e5e5e5;
}

.tool-more {
  margin-left: 20px;
}

.addressbar {
  display: flex;
  height: 65px;
  padding: 10px 13px 11px 0;
}

.nav {
  display: flex;
  align-items: center;
  width: 172px;
  padding: 0 0 1px 19px;
  fill: none;
  stroke: #555;
  stroke-width: 1.4;
}

.nav svg:nth-child(2) { margin-left: 28px; }
.nav svg:nth-child(3) { margin-left: 25px; }
.nav svg:nth-child(4) { margin-left: 23px; }

.nav .off {
  stroke: #999;
}

.path,
.search {
  display: flex;
  align-items: center;
  border: 1px solid #d8d8d8;
  height: 44px;
}

.path {
  width: 1277px;
  padding: 0 13px 2px 10px;
}

.path-sep {
  margin: 0 9px 0 8px;
  color: #555;
}

.path-drop {
  margin: 0 28px 0 auto;
  color: #555;
}

.search {
  flex: 1;
  justify-content: space-between;
  margin-left: 12px;
  padding: 0 18px 0 9px;
  color: #6d6d6d;
}

.main {
  display: flex;
  height: 816px;
}

.sidebar {
  width: 331px;
  overflow: hidden;
}

.nav-item {
  display: flex;
  align-items: center;
  height: 40px;
  margin: 0 1px 0 3px;
  padding-left: 40px;
  border-radius: 2px;
  color: #000;
}

.nav-item .ico {
  width: 20px;
  height: 20px;
  margin-right: 5px;
}

.nav-item .open {
  width: 11px;
  height: 11px;
  margin: 0 16px 0 -27px;
}

.nav-item.sub {
  padding-left: 24px;
}

.nav-item .closed {
  width: 11px;
  height: 11px;
  margin-right: 15px;
  color: #888;
}

.nav-item .pin {
  width: 14px;
  height: 14px;
  margin: 0 3px 0 auto;
}

.nav-item.last span {
  padding-bottom: 3px;
}

.nav-item.selected {
  background: #d9d9d9;
}

.nav-rule {
  height: 40px;
  margin: 0 11px 0 13px;
  background: linear-gradient(#d6d6d6, #d6d6d6) 0 20px / 100% 1px no-repeat;
}

.scrollbar {
  width: 20px;
  background: #f0f0f0;
}

.scrollbar .thumb {
  background: #868686;
  border-radius: 3px;
}

.side-scroll {
  display: flex;
  flex-direction: column;
  align-items: center;
  padding: 7px 0 6px;
}

.side-scroll .thumb {
  width: 10px;
  height: 448px;
  margin: 6px 0 auto;
}

.main-scroll {
  padding: 21px 7px;
}

.main-scroll .thumb {
  width: 6px;
  height: 444px;
  border-radius: 1px;
}

/* file list */

.files {
  flex: 1;
  margin-left: 2px;
  border-left: 1px solid #f3f3f3;
  overflow: hidden;
}

.file-head,
.file {
  display: grid;
  align-items: center;
}

.file-head {
  grid-template-columns: 342px 180px 150px 100px;
  height: 32px;
  margin-bottom: 5px;
  color: #4c607a;
}

.file-head span {
  height: 32px;
  padding: 6px 0 0 7px;
  border-right: 1px solid #e5e5e5;
}

.file-head .col-name {
  position: relative;
  padding-left: 39px;
}

.sort-mark {
  position: absolute;
  left: 181px;
  top: 0;
}

.file {
  grid-template-columns: 25px 299px 180px 150px 83px;
  height: 41px;
  padding-left: 25px;
  color: #6d6d6d;
}

.file svg {
  width: 20px;
  height: 20px;
}

.file span:nth-of-type(1) {
  color: #000;
}

.file span:nth-of-type(2) {
  letter-spacing: -0.45px;
}

.file span:nth-of-type(4) {
  text-align: right;
}

.tight {
  letter-spacing: -0.6px;
}

.loose {
  letter-spacing: -0.15px;
}

.statusbar {
  display: flex;
  height: 29px;
  padding: 0 9px 0 17px;
  color: #1e395b;
}

.count {
  width: 91px;
  height: 16px;
  margin: 6px auto 0 0;
  line-height: 17px;
  border-right: 1px solid #eee;
}

.view-details {
  width: 28px;
  height: 29px;
  padding: 7px 0 0 6px;
  background: #cce8f0;
  border: 1px solid #26a0da;
}

.view-icons {
  width: 20px;
  height: 20px;
  margin: 4px 0 0 4px;
  padding: 3px;
  background: #f7f7f7;
}

/* properties dialog */

.dialog {
  position: absolute;
  left: 444px;
  top: 414px;
  width: 484px;
  height: 594px;
  background: #f0f0f0;
  border: 1px solid #a9a9a9;
  border-radius: 10px;
  box-shadow: 0 18px 40px rgba(0, 0, 0, 0.38);
  color: #000;
  font-family: "Liberation Sans", Arial, sans-serif;
  font-size: 13.4px;
  letter-spacing: 0;
  line-height: 16px;
}

.dialog-title {
  display: flex;
  align-items: center;
  height: 37px;
  padding: 0 15px 0 10px;
  background: #f0f3f9;
  border-radius: 9px 9px 0 0;
  font-family: "Open Sans", "Noto Sans", sans-serif;
  font-size: 14.6px;
  letter-spacing: -0.15px;
}

.dialog-title span {
  margin-left: 6px;
}

.dialog-close {
  margin-left: auto;
}

.dialog-tabs {
  display: flex;
  align-items: flex-end;
  height: 34px;
  padding-left: 11px;
}

.dialog-tabs span {
  height: 23px;
  padding-top: 5px;
  text-align: center;
  background: #f3f3f3;
  border: 1px solid #e5e5e5;
  border-width: 1px 1px 0 0;
}

.dialog-tabs .current {
  height: 27px;
  margin-bottom: -1px;
  background: #f9f9f9;
  z-index: 1;
}

.dialog-tabs .dt-general { width: 74px; border-left-width: 1px; }
.dialog-tabs .dt-share { width: 96px; }
.dialog-tabs .dt-security { width: 74px; border-right: 0; }
.dialog-tabs .dt-path { width: 78px; border-left-width: 1px; }
.dialog-tabs .dt-versions { width: 129px; }

.dialog-page {
  width: 464px;
  height: 476px;
  margin-left: 8px;
  padding: 21px 0 0 15px;
  background: #f9f9f9;
  border: 1px solid #e5e5e5;
}

.intro {
  display: flex;
  height: 78px;
}

.intro p {
  margin: 4px 0 0 4px;
  white-space: nowrap;
}

.dialog-body {
  padding-left: 44px;
  white-space: nowrap;
}

.field {
  width: 376px;
  height: 24px;
  margin: 27px 0 11px;
  padding: 3px 2px;
  background: #fff;
  border: 1px solid #e5e9f0;
  border-bottom: 2px solid #0067c0;
}

.field span {
  display: inline-block;
  height: 16px;
  background: #0078d7;
  color: #fff;
  letter-spacing: 0.08px;
}

.buttons {
  display: flex;
  gap: 10px;
  margin-left: 1px;
}

button {
  width: 98px;
  height: 26px;
  padding: 1px 0 0;
  background: #fdfdfd;
  border: 1px solid #d0d0d0;
  border-bottom-color: #b9b9b9;
  border-radius: 4px;
  color: #000;
  font: inherit;
}

button.wide {
  width: 158px;
}

.dialog-foot {
  display: flex;
  justify-content: flex-end;
  gap: 10px;
  padding: 10px 9px 0 0;
}

button.default {
  border-color: #0078d4;
}

button:disabled {
  background: #f5f5f5;
  border-color: #eaeaea;
  color: #9a9a9a;
}

/* taskbar */

.taskbar {
  position: relative;
  display: flex;
  align-items: center;
  height: 60px;
  background: #e0e3f1;
  border-top: 1px solid #b2b4c0;
  padding-left: 26px;
}

.task-search {
  display: flex;
  align-items: center;
  width: 273px;
  height: 39px;
  margin: 0 3px 0 18px;
  padding-left: 13px;
  background: #f5f6fb;
  border: 1px solid #cfd3e4;
  border-radius: 20px;
  overflow: hidden;
}

.task-search span {
  margin-left: 12px;
  color: #4a4a4a;
  font-size: 16px;
}

.picture {
  margin-left: auto;
}

.apps {
  display: flex;
}

.app {
  position: relative;
  display: flex;
  align-items: center;
  justify-content: center;
  width: 55px;
  height: 48px;
}

.app svg {
  position: relative;
}

.app.running::after,
.app.active::after {
  content: "";
  position: absolute;
  left: 24px;
  bottom: 0;
  width: 8px;
  height: 4px;
  border-radius: 2px;
  background: #868891;
}

.app.active::after {
  left: 18px;
  width: 20px;
  background: #2a7da6;
}

.app.active::before {
  content: "";
  position: absolute;
  left: 4px;
  top: 0;
  width: 43px;
  height: 48px;
  background: #f3f4fb;
  border-radius: 5px;
  box-shadow: 0 0 0 1px #d8dbea, 5px 0 0 -1px #f0f1f9, 5px 0 0 #d5d8e8;
}

.tray {
  display: flex;
  align-items: center;
  margin-left: auto;
  padding-right: 26px;
}

.wifi { margin-left: 23px; }
.volume { margin-left: 10px; }
.battery { margin-left: 10px; }
.bell { margin-left: 12px; }

.clock {
  display: flex;
  flex-direction: column;
  align-items: flex-end;
  width: 97px;
  padding-bottom: 4px;
}
```
